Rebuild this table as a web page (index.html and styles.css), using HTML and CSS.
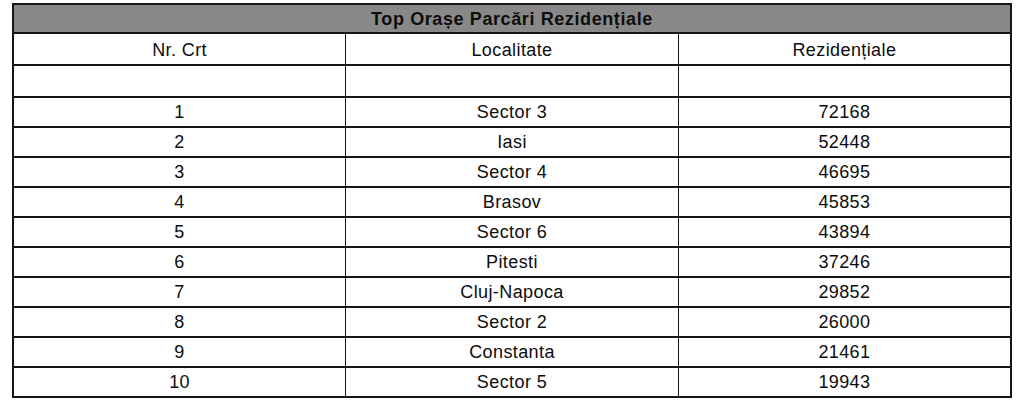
FILE: index.html
```html
<!DOCTYPE html>
<html lang="ro">
<head>
<meta charset="utf-8">
<link rel="stylesheet" href="styles.css">
</head>
<body>
<table class="top-table">
  <thead>
    <tr class="title-row"><th colspan="3">Top Orașe Parcări Rezidențiale</th></tr>
    <tr class="col-row"><td>Nr. Crt</td><td>Localitate</td><td>Rezidențiale</td></tr>
    <tr class="empty-row"><td></td><td></td><td></td></tr>
  </thead>
  <tbody>
    <tr><td>1</td><td>Sector 3</td><td>72168</td></tr>
    <tr><td>2</td><td>Iasi</td><td>52448</td></tr>
    <tr><td>3</td><td>Sector 4</td><td>46695</td></tr>
    <tr><td>4</td><td>Brasov</td><td>45853</td></tr>
    <tr><td>5</td><td>Sector 6</td><td>43894</td></tr>
    <tr><td>6</td><td>Pitesti</td><td>37246</td></tr>
    <tr><td>7</td><td>Cluj-Napoca</td><td>29852</td></tr>
    <tr><td>8</td><td>Sector 2</td><td>26000</td></tr>
    <tr><td>9</td><td>Constanta</td><td>21461</td></tr>
    <tr><td>10</td><td>Sector 5</td><td>19943</td></tr>
  </tbody>
</table>
</body>
</html>
```
FILE: styles.css
```css
html, body {
  margin: 0;
  padding: 0;
  background: #ffffff;
}
body {
  padding: 3px 0 0 12px;
  font-family: "Liberation Sans", Arial, sans-serif;
  color: #0d0d0d;
}
.top-table {
  width: 1000px;
  border-collapse: collapse;
  table-layout: fixed;
  border: 2px solid #151515;
  font-size: 18px;
  letter-spacing: 0.4px;
}
.top-table th,
.top-table td {
  padding: 0;
  text-align: center;
  vertical-align: middle;
  border-top: 2px solid #151515;
  border-bottom: 2px solid #151515;
  border-left: 1px solid #151515;
  border-right: 1px solid #151515;
  line-height: 20px;
}
.title-row th {
  background: #888888;
  font-weight: bold;
  letter-spacing: 0.6px;
  height: 26px;
  padding-top: 1px;
}
.col-row td {
  height: 28px;
  padding-top: 2px;
}
.empty-row td {
  height: 30px;
}
tbody td {
  height: 28px;
  padding-top: 2px;
}
```
